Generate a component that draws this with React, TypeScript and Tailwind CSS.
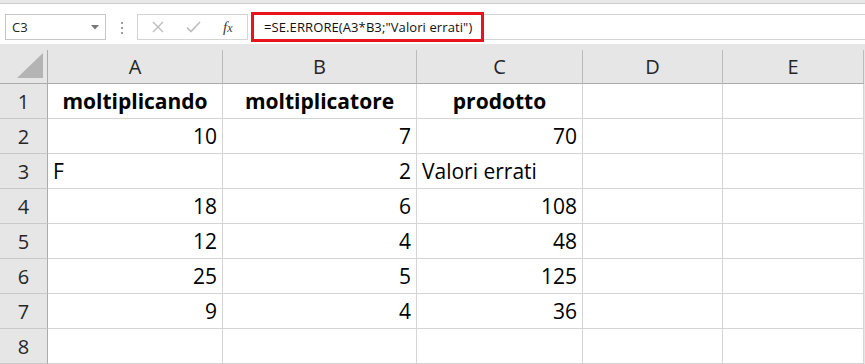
import React from "react";

type Align = "l" | "r" | "c";
type Cell = { t: string; a: Align; b?: boolean };

const colClasses = ["w-[175px]", "w-[194px]", "w-[166px]", "w-[140px]", "w-[141px]"];
const letters = ["A", "B", "C", "D", "E"];

const E: Cell = { t: "", a: "l" };
const n = (v: string): Cell => ({ t: v, a: "r" });

const rows: Cell[][] = [
  [
    { t: "moltiplicando", a: "c", b: true },
    { t: "moltiplicatore", a: "c", b: true },
    { t: "prodotto", a: "c", b: true },
    E,
    E,
  ],
  [n("10"), n("7"), n("70"), E, E],
  [{ t: "F", a: "l" }, n("2"), { t: "Valori errati", a: "l" }, E, E],
  [n("18"), n("6"), n("108"), E, E],
  [n("12"), n("4"), n("48"), E, E],
  [n("25"), n("5"), n("125"), E, E],
  [n("9"), n("4"), n("36"), E, E],
  [E, E, E, E, E],
];

function alignClass(c: Cell) {
  if (c.a === "r") return "justify-end pr-[5px]";
  if (c.a === "l") return "justify-start pl-[5px]";
  return "justify-center";
}

function CornerTriangle() {
  return (
    <svg width="27" height="26" viewBox="0 0 27 26" className="block">
      <polygon points="26,0 26,25 0,25" fill="#b4b4b4" />
    </svg>
  );
}

export default function App() {
  return (
    <div className="w-[865px] h-[364px] overflow-hidden bg-white font-['Open_Sans',sans-serif] text-black">
      {/* ribbon edge */}
      <div className="h-[3px] bg-[#e9e9e9]" />
      <div className="h-[1px] bg-[#cfcfcf]" />

      {/* formula bar */}
      <div className="h-[40px] flex items-start pt-[10px] pl-[5px] bg-white">
        <div className="w-[101px] h-[26px] border border-[#c6c6c6] bg-white flex items-center justify-between pl-[6px] pr-[6px]">
          <span className="text-[13px] leading-none text-[#222]">C3</span>
          <svg width="8" height="5" viewBox="0 0 8 5" className="block">
            <polygon points="0,0 8,0 4,4.5" fill="#777" />
          </svg>
        </div>
        <div className="ml-[15px] mt-[8px] flex flex-col gap-[3px]">
          <span className="block w-[2px] h-[2px] bg-[#9c9c9c]" />
          <span className="block w-[2px] h-[2px] bg-[#9c9c9c]" />
          <span className="block w-[2px] h-[2px] bg-[#9c9c9c]" />
        </div>
        <div className="ml-[14px] w-[111px] h-[26px] border border-[#d4d4d4] bg-white flex items-center">
          <svg width="12" height="12" viewBox="0 0 12 12" className="ml-[14px] block">
            <path d="M1 1 L11 11 M11 1 L1 11" stroke="#bdbdbd" strokeWidth="1.4" fill="none" />
          </svg>
          <svg width="15" height="12" viewBox="0 0 15 12" className="ml-[22px] block">
            <path d="M1 6.5 L5 10.5 L14 1" stroke="#bdbdbd" strokeWidth="1.6" fill="none" />
          </svg>
          <span className="ml-[22px] font-['Liberation_Serif',serif] italic text-[15px] leading-none text-[#404040]">
            f<span className="text-[12px]">x</span>
          </span>
        </div>
        <div className="relative ml-[3px] flex-1 h-[26px] border-y border-[#d4d4d4] bg-white">
          <div className="absolute left-0 top-[-3px] w-[233px] h-[30px] border-[3px] border-[#e8141c] flex items-center pl-[10px]">
            <span className="text-[13px] leading-none text-[#111] whitespace-nowrap tracking-[0.1px]">
              =SE.ERRORE(A3*B3;"Valori errati")
            </span>
          </div>
        </div>
      </div>

      {/* sheet */}
      <div className="bg-[#e6e6e6] pt-[6px]">
        {/* column headers */}
        <div className="flex">
          <div className="w-[48px] h-[34px] border-r border-b border-[#ababab] flex items-end justify-end pr-[3px] pb-[4px]">
            <CornerTriangle />
          </div>
          {letters.map((l, i) => (
            <div
              key={l}
              className={`${colClasses[i]} h-[34px] border-r border-b border-r-[#bcbcbc] border-b-[#ababab] flex items-end justify-center pb-[6px] text-[20px] leading-none text-[#262626]`}
            >
              {l}
            </div>
          ))}
        </div>

        {rows.map((r, ri) => (
          <div key={ri} className="flex">
            <div className="w-[48px] h-[35px] border-r border-b border-r-[#ababab] border-b-[#c9c9c9] flex items-end justify-center pb-[6px] text-[20px] leading-none text-[#262626]">
              {ri + 1}
            </div>
            {r.map((c, ci) => (
              <div
                key={ci}
                className={`${colClasses[ci]} h-[35px] bg-white border-r border-b border-[#d4d4d4] flex items-end pb-[6px] text-[21px] leading-none whitespace-nowrap ${alignClass(c)} ${c.b ? "font-bold" : ""}`}
              >
                {c.t}
              </div>
            ))}
          </div>
        ))}
      </div>
    </div>
  );
}
